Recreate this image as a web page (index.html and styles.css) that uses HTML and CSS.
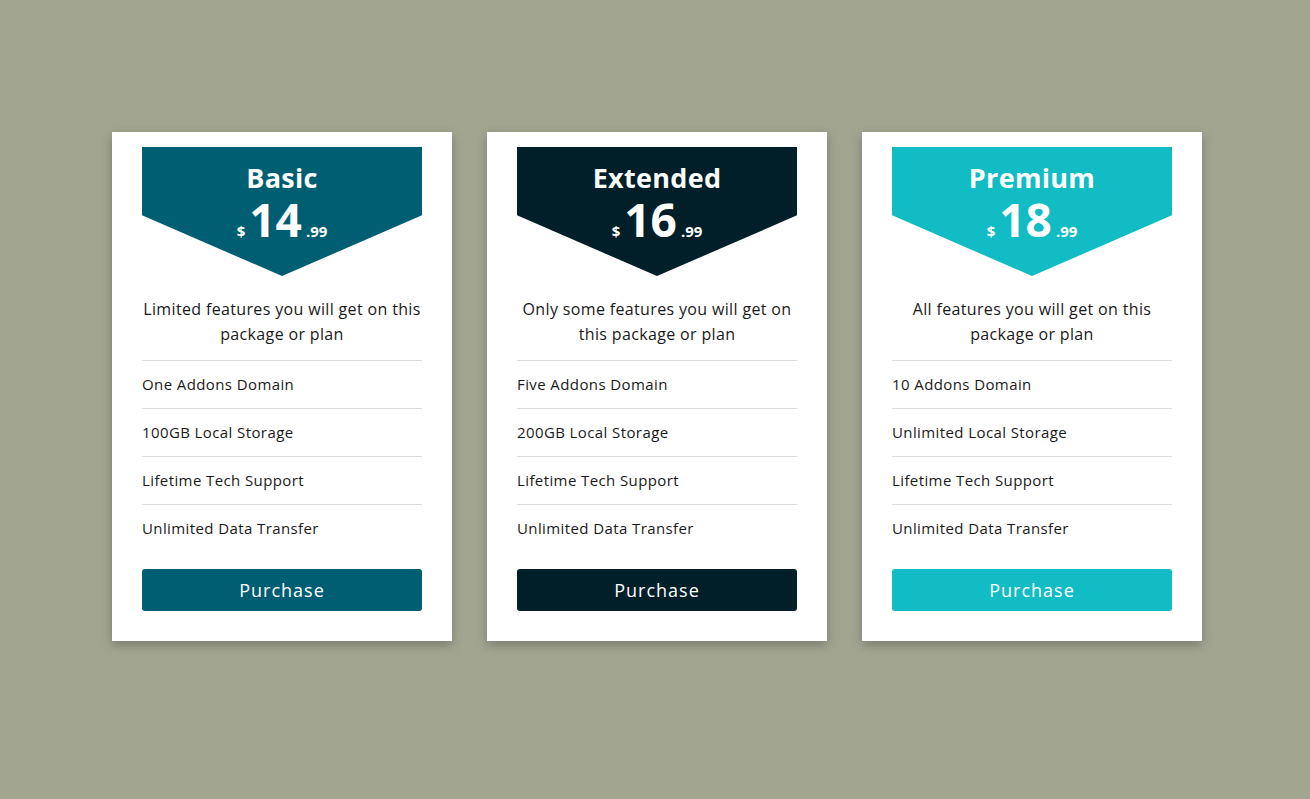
FILE: index.html
```html
<!DOCTYPE html>
<html lang="en">
<head>
  <meta charset="UTF-8" />
  <meta name="viewport" content="width=device-width, initial-scale=1.0" />
  <title>Pricing Plans</title>
  <link rel="stylesheet" href="styles.css">
</head>
<body>
  <!-- Pricing cards -->
  <div class="pricing">
    <div class="card basic">
      <div class="card-head">
        <h2>Basic</h2>
        <div class="price"><span class="cur">$</span><span class="amount">14</span><span class="cents">.99</span></div>
      </div>
      <p class="desc">Limited features you will get on this package or plan</p>
      <ul class="features">
        <li>One Addons Domain</li>
        <li>100GB Local Storage</li>
        <li>Lifetime Tech Support</li>
        <li>Unlimited Data Transfer</li>
      </ul>
      <button class="buy">Purchase</button>
    </div>

    <div class="card extended">
      <div class="card-head">
        <h2>Extended</h2>
        <div class="price"><span class="cur">$</span><span class="amount">16</span><span class="cents">.99</span></div>
      </div>
      <p class="desc">Only some features you will get on this package or plan</p>
      <ul class="features">
        <li>Five Addons Domain</li>
        <li>200GB Local Storage</li>
        <li>Lifetime Tech Support</li>
        <li>Unlimited Data Transfer</li>
      </ul>
      <button class="buy">Purchase</button>
    </div>

    <div class="card premium">
      <div class="card-head">
        <h2>Premium</h2>
        <div class="price"><span class="cur">$</span><span class="amount">18</span><span class="cents">.99</span></div>
      </div>
      <p class="desc">All features you will get on this package or plan</p>
      <ul class="features">
        <li>10 Addons Domain</li>
        <li>Unlimited Local Storage</li>
        <li>Lifetime Tech Support</li>
        <li>Unlimited Data Transfer</li>
      </ul>
      <button class="buy">Purchase</button>
    </div>
  </div>
</body>
</html>
```

FILE: styles.css
```css
:root {
  --page-bg: #a2a590;
  --basic: #005e73;
  --extended: #001f29;
  --premium: #12bcc4;
  --text: #1a1a1a;
  --line: #dddddd;
}

* {
  margin: 0;
  padding: 0;
  box-sizing: border-box;
}
body {
  font-family: 'Open Sans', 'Noto Sans', sans-serif;
  background: var(--page-bg);
  color: var(--text);
  min-height: 100vh;
}

/* Cards row */
.pricing {
  display: flex;
  justify-content: center;
  gap: 35px;
  padding: 132px 0 0 4px;
}
.card {
  width: 340px;
  background: #fff;
  padding: 15px 30px 30px;
  box-shadow: 0 4px 10px rgba(0, 0, 0, 0.25);
  display: flex;
  flex-direction: column;
}

/* Arrow shaped header */
.card-head {
  height: 129px;
  color: #fff;
  text-align: center;
  padding-top: 16px;
  clip-path: polygon(0 0, 100% 0, 100% 53%, 50% 100%, 0 53%);
}
.card-head h2 {
  font-size: 27px;
  font-weight: 700;
  line-height: 30px;
  letter-spacing: 0.3px;
}
.price {
  display: flex;
  justify-content: center;
  align-items: baseline;
  gap: 4px;
  line-height: 52px;
  font-weight: 700;
}
.price .amount { font-size: 46px; }
.price .cur, .price .cents { font-size: 15px; }

.basic .card-head, .basic .buy { background: var(--basic); }
.extended .card-head, .extended .buy { background: var(--extended); }
.premium .card-head, .premium .buy { background: var(--premium); }

/* Description and list */
.desc {
  text-align: center;
  font-size: 16px;
  line-height: 25px;
  letter-spacing: 0.35px;
  padding: 21px 0 13px;
  border-bottom: 1px solid var(--line);
}
.features {
  list-style: none;
}
.features li {
  font-size: 15px;
  line-height: 47px;
  letter-spacing: 0.4px;
  border-bottom: 1px solid var(--line);
}
.features li:last-child {
  border-bottom: none;
}

.buy {
  margin-top: 17px;
  height: 42px;
  border: none;
  border-radius: 3px;
  color: #fff;
  font-family: inherit;
  font-size: 18px;
  letter-spacing: 1px;
  cursor: pointer;
}
```
